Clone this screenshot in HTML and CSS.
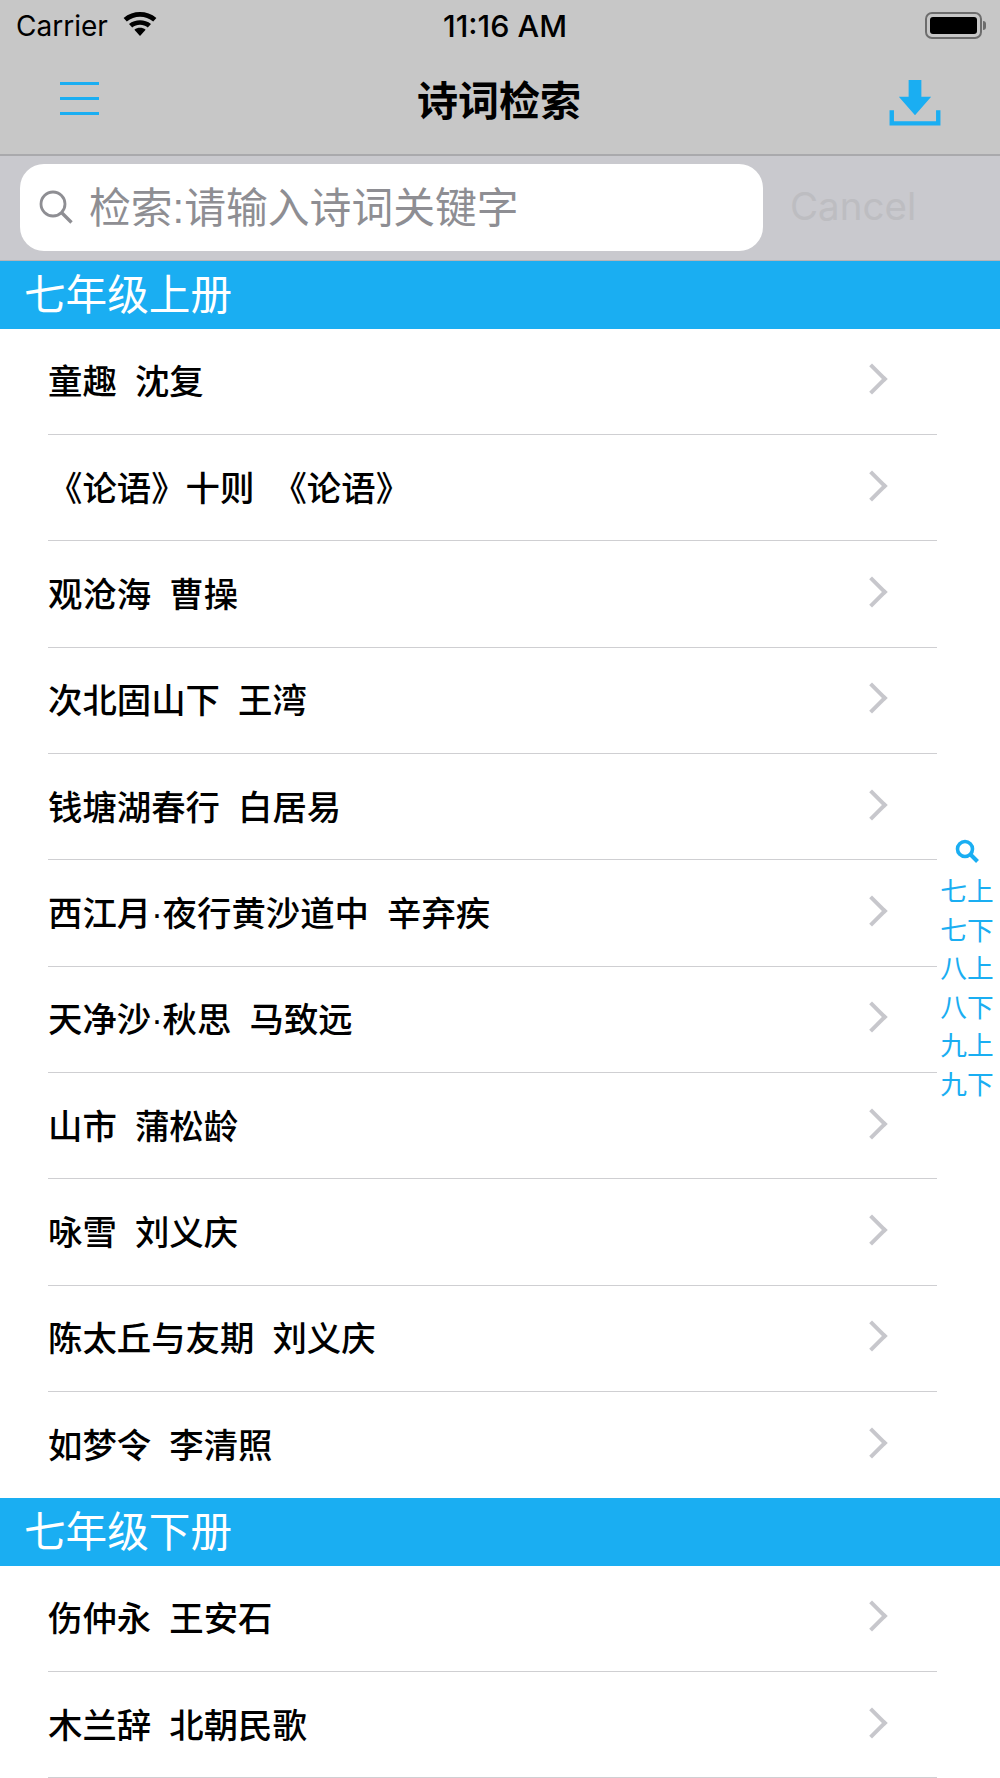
FILE: index.html
```html
<!DOCTYPE html>
<html lang="zh">
<head>
    <meta charset="UTF-8">
    <meta name="viewport" content="width=device-width, initial-scale=1.0">
    <title>诗词检索</title>
    <link rel="stylesheet" href="styles.css">
</head>
<body>
    <div class="app">
        <div class="status-bar">
            <div class="status-left">
                <span class="carrier">Carrier</span>
                <svg class="wifi-icon" width="36" height="26" viewBox="0 0 36 26">
                    <path d="M18 25l-5.600-6.200c3.200-2.600 8-2.600 11.200 0z" fill="#000"/>
                    <path d="M10.200 16.400l-3.200-3.500c6.200-5 15.800-5 22 0l-3.200 3.500c-4.500-3.600-11.100-3.600-15.600 0z" fill="#000"/>
                    <path d="M4.800 10.500l-3.200-3.500c9.400-7.900 23.400-7.900 32.800 0l-3.200 3.500c-7.600-6.300-18.800-6.300-26.400 0z" fill="#000"/>
                </svg>
            </div>
            <span class="clock">11:16 AM</span>
            <div class="battery">
                <div class="battery-body"><div class="battery-level"></div></div>
                <div class="battery-cap"></div>
            </div>
        </div>

        <div class="nav-bar">
            <div class="menu-btn">
                <span class="menu-line"></span>
                <span class="menu-line"></span>
                <span class="menu-line"></span>
            </div>
            <h1 class="nav-title">诗词检索</h1>
            <svg class="download-icon" width="52" height="47" viewBox="0 0 52 48">
                <path d="M19.500 0h13v17h10l-16.500 19-16.500-19h10z" fill="#1aaef2"/>
                <path d="M0 31h4.500v11h43v-11h4.500v15.500h-52z" fill="#1aaef2"/>
            </svg>
        </div>

        <div class="search-bar">
            <div class="search-box">
                <svg class="search-icon" width="36" height="36" viewBox="0 0 36 36">
                    <circle cx="15" cy="15" r="12" fill="none" stroke="#8e8e93" stroke-width="2.800"/>
                    <path d="M24 24l9.500 9.500" fill="none" stroke="#8e8e93" stroke-width="3.400"/>
                </svg>
                <span class="search-placeholder">检索:请输入诗词关键字</span>
            </div>
            <span class="cancel-btn">Cancel</span>
        </div>

        <div class="list">
            <div class="section-header">七年级上册</div>
            <div class="row"><div class="row-inner"><span class="row-text">童趣  沈复</span><span class="chevron"></span></div></div>
            <div class="row"><div class="row-inner"><span class="row-text">《论语》十则  《论语》</span><span class="chevron"></span></div></div>
            <div class="row"><div class="row-inner"><span class="row-text">观沧海  曹操</span><span class="chevron"></span></div></div>
            <div class="row"><div class="row-inner"><span class="row-text">次北固山下  王湾</span><span class="chevron"></span></div></div>
            <div class="row"><div class="row-inner"><span class="row-text">钱塘湖春行  白居易</span><span class="chevron"></span></div></div>
            <div class="row"><div class="row-inner"><span class="row-text">西江月·夜行黄沙道中  辛弃疾</span><span class="chevron"></span></div></div>
            <div class="row"><div class="row-inner"><span class="row-text">天净沙·秋思  马致远</span><span class="chevron"></span></div></div>
            <div class="row"><div class="row-inner"><span class="row-text">山市  蒲松龄</span><span class="chevron"></span></div></div>
            <div class="row"><div class="row-inner"><span class="row-text">咏雪  刘义庆</span><span class="chevron"></span></div></div>
            <div class="row"><div class="row-inner"><span class="row-text">陈太丘与友期  刘义庆</span><span class="chevron"></span></div></div>
            <div class="row last"><div class="row-inner"><span class="row-text">如梦令  李清照</span><span class="chevron"></span></div></div>

            <div class="section-header">七年级下册</div>
            <div class="row"><div class="row-inner"><span class="row-text">伤仲永  王安石</span><span class="chevron"></span></div></div>
            <div class="row"><div class="row-inner"><span class="row-text">木兰辞  北朝民歌</span><span class="chevron"></span></div></div>

            <div class="section-index">
                <svg class="index-search" width="26" height="26" viewBox="0 0 26 26">
                    <circle cx="11" cy="11" r="7.500" fill="none" stroke="#1aaef2" stroke-width="3.600"/>
                    <path d="M16.500 16.500l7 7" fill="none" stroke="#1aaef2" stroke-width="4"/>
                </svg>
                <span>七上</span>
                <span>七下</span>
                <span>八上</span>
                <span>八下</span>
                <span>九上</span>
                <span>九下</span>
            </div>
        </div>
    </div>
</body>
</html>
```

FILE: styles.css
```css
* {
    margin: 0;
    padding: 0;
    box-sizing: border-box;
}

body {
    font-family: "Liberation Sans", "Noto Sans CJK SC", sans-serif;
    background: #fff;
}

.app {
    height: 1778px;
    overflow: hidden;
    display: flex;
    flex-direction: column;
}

.status-bar {
    height: 53px;
    flex-shrink: 0;
    background: #c7c7c7;
    display: flex;
    align-items: center;
    justify-content: space-between;
    padding: 0 14px 3px 16px;
    position: relative;
    color: #000;
}

.status-left {
    display: flex;
    align-items: center;
    gap: 14px;
}

.carrier {
    font-family: Inter, sans-serif;
    font-size: 28px;
    margin-top: 2px;
}

.wifi-icon {
    margin-top: -3px;
}

.clock {
    font-family: Inter, sans-serif;
    font-size: 30.500px;
    font-weight: 500;
    position: absolute;
    left: 50%;
    margin-left: 5px;
    top: 7px;
    transform: translateX(-50%);
}

.battery {
    display: flex;
    align-items: center;
    gap: 1px;
}

.battery-body {
    width: 57px;
    height: 27px;
    border: 2px solid #6d6d6d;
    border-radius: 7px;
    padding: 3px;
}

.battery-level {
    height: 100%;
    background: #000;
    border-radius: 3px;
}

.battery-cap {
    width: 3px;
    height: 9px;
    background: #6d6d6d;
    border-radius: 0 3px 3px 0;
}

.nav-bar {
    height: 103px;
    flex-shrink: 0;
    background: #c7c7c7;
    border-bottom: 2px solid #a9a9ac;
    display: flex;
    align-items: center;
    justify-content: space-between;
    padding: 0 59px 0 60px;
    position: relative;
}

.menu-btn {
    width: 39px;
    display: flex;
    flex-direction: column;
    gap: 12px;
    margin-top: -11px;
}

.menu-line {
    height: 3px;
    background: #1aaef2;
}

.nav-title {
    font-size: 41px;
    font-weight: 700;
    color: #000;
    position: absolute;
    left: 417px;
    top: 23px;
    line-height: 52px;
}

.search-bar {
    height: 105px;
    flex-shrink: 0;
    background: #c9c9ce;
    display: flex;
    align-items: center;
    padding: 0 0 0 20px;
    border-bottom: 1px solid #b4b4b8;
}

.search-box {
    width: 743px;
    height: 87px;
    margin-top: -2px;
    background: #fff;
    border-radius: 24px;
    display: flex;
    align-items: center;
    gap: 15px;
    padding-left: 18px;
}

.search-placeholder {
    font-size: 41.800px;
    color: #8e8e93;
    margin-top: -4px;
}

.cancel-btn {
    font-family: Inter, sans-serif;
    font-size: 38.500px;
    color: #bdbdc1;
    margin-left: 27px;
    margin-top: -4px;
}

.list {
    position: relative;
    flex: 1;
    min-height: 0;
}

.section-header {
    height: 67.500px;
    background: #1aaef2;
    color: #fff;
    font-size: 41.600px;
    line-height: 69px;
    padding-left: 24px;
}

.row {
    height: 106.350px;
    padding-left: 48px;
    padding-right: 63px;
}

.row-inner {
    height: 100%;
    display: flex;
    align-items: center;
    justify-content: space-between;
    border-bottom: 1.500px solid #cfcfd2;
}

.row.last .row-inner {
    border-bottom: none;
}

.row-text {
    font-size: 34.400px;
    font-weight: 500;
    color: #000;
    white-space: pre;
    word-spacing: -0.500px;
    margin-top: -4px;
}

.chevron {
    width: 22px;
    height: 22px;
    border-top: 4px solid #c7c7cc;
    border-right: 4px solid #c7c7cc;
    transform: rotate(45deg);
    margin-right: 54px;
    margin-top: -4px;
}

.section-index {
    position: absolute;
    right: 3px;
    top: 577px;
    width: 60px;
    display: flex;
    flex-direction: column;
    align-items: center;
    color: #1aaef2;
    font-size: 26.700px;
    line-height: 38.500px;
    white-space: nowrap;
}

.index-search {
    margin-bottom: 9px;
}
```
